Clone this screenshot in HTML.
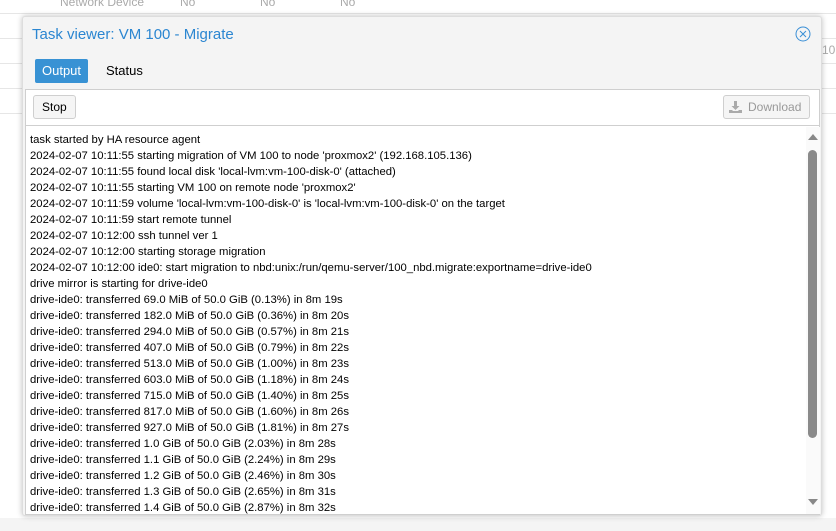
<!DOCTYPE html>
<html><head><style>
*{margin:0;padding:0;box-sizing:border-box}
body{width:836px;height:531px;background:#fff;font-family:"Liberation Sans",sans-serif;position:relative;overflow:hidden}
.bg{position:absolute;left:0;right:0;border-top:1px solid #e6e6e6}
.bgt{position:absolute;top:-5px;color:#aaa;font-size:12px}
.win{position:absolute;left:22px;top:16px;width:800px;height:500px;background:#f4f4f4;border:1px solid #ddd;border-radius:3px;box-shadow:0 0 6px rgba(0,0,0,.25)}
.title{position:absolute;left:9px;top:9px;font-size:15px;color:#2b86d1}
.close{position:absolute;left:772px;top:9px;width:16px;height:16px}
.tab{position:absolute;top:42px;height:24px;font-size:13px;line-height:24px;padding:0 7px}
.panel{position:absolute;left:2px;top:72px;width:795px;height:426px;background:#fff;border:1px solid #cfcfcf}
.tb{height:36px;border-bottom:1px solid #cfcfcf;position:relative}
.btn{position:absolute;top:5px;height:24px;border:1px solid #cfcfcf;border-radius:3px;background:#f5f5f5;font-size:12px;line-height:22px;padding:0 8px}
.log{position:absolute;left:4px;top:42px;font-size:11.3px;line-height:16px;color:#000;white-space:pre}
.sb{position:absolute;left:780px;top:37px;width:14px;height:387px;background:#fafafa}
</style></head><body>
<div class="bgt" style="left:60px">Network Device</div><div class="bgt" style="left:180px">No</div><div class="bgt" style="left:260px">No</div><div class="bgt" style="left:340px">No</div>
<div class="bg" style="top:13px"></div><div class="bg" style="top:38px"></div><div class="bg" style="top:63px"></div><div class="bg" style="top:88px"></div><div class="bg" style="top:113px"></div>
<div style="position:absolute;left:822px;top:43px;font-size:12px;color:#aaa">10</div>
<div style="position:absolute;left:0;right:0;top:518px;bottom:0;background:#f4f4f4"></div>
<div class="win">
<div class="title">Task viewer: VM 100 - Migrate</div>
<svg class="close" viewBox="0 0 16 16"><circle cx="8" cy="8" r="7" fill="none" stroke="#3a8fd6" stroke-width="1"/><path d="M5 5L11 11M11 5L5 11" stroke="#3a8fd6" stroke-width="1"/></svg>
<div class="tab" style="left:12px;background:#3892d4;color:#fff;border-radius:2px">Output</div>
<div class="tab" style="left:76px;color:#000">Status</div>
<div class="panel">
<div class="tb">
<div class="btn" style="left:7px">Stop</div>
<div class="btn" style="left:697px;color:#999;width:87px;padding-left:24px"><svg style="position:absolute;left:5px;top:5px" width="13" height="12" viewBox="0 0 13 12"><path d="M5 0h3v5h2.5L6.5 9 2.5 5H5z" fill="#aaa"/><path d="M0 9h3l1 1h5l1-1h3v3H0z" fill="#aaa"/></svg>Download</div>
</div>
<div class="log">task started by HA resource agent
2024-02-07 10:11:55 starting migration of VM 100 to node 'proxmox2' (192.168.105.136)
2024-02-07 10:11:55 found local disk 'local-lvm:vm-100-disk-0' (attached)
2024-02-07 10:11:55 starting VM 100 on remote node 'proxmox2'
2024-02-07 10:11:59 volume 'local-lvm:vm-100-disk-0' is 'local-lvm:vm-100-disk-0' on the target
2024-02-07 10:11:59 start remote tunnel
2024-02-07 10:12:00 ssh tunnel ver 1
2024-02-07 10:12:00 starting storage migration
2024-02-07 10:12:00 ide0: start migration to nbd:unix:/run/qemu-server/100_nbd.migrate:exportname=drive-ide0
drive mirror is starting for drive-ide0
drive-ide0: transferred 69.0 MiB of 50.0 GiB (0.13%) in 8m 19s
drive-ide0: transferred 182.0 MiB of 50.0 GiB (0.36%) in 8m 20s
drive-ide0: transferred 294.0 MiB of 50.0 GiB (0.57%) in 8m 21s
drive-ide0: transferred 407.0 MiB of 50.0 GiB (0.79%) in 8m 22s
drive-ide0: transferred 513.0 MiB of 50.0 GiB (1.00%) in 8m 23s
drive-ide0: transferred 603.0 MiB of 50.0 GiB (1.18%) in 8m 24s
drive-ide0: transferred 715.0 MiB of 50.0 GiB (1.40%) in 8m 25s
drive-ide0: transferred 817.0 MiB of 50.0 GiB (1.60%) in 8m 26s
drive-ide0: transferred 927.0 MiB of 50.0 GiB (1.81%) in 8m 27s
drive-ide0: transferred 1.0 GiB of 50.0 GiB (2.03%) in 8m 28s
drive-ide0: transferred 1.1 GiB of 50.0 GiB (2.24%) in 8m 29s
drive-ide0: transferred 1.2 GiB of 50.0 GiB (2.46%) in 8m 30s
drive-ide0: transferred 1.3 GiB of 50.0 GiB (2.65%) in 8m 31s
drive-ide0: transferred 1.4 GiB of 50.0 GiB (2.87%) in 8m 32s</div>
<div class="sb">
<svg style="position:absolute;left:2px;top:7px" width="10" height="6"><path d="M5 0L10 6H0z" fill="#888"/></svg>
<div style="position:absolute;left:2px;top:23px;width:9px;height:288px;background:#8a8a8a;border-radius:5px"></div>
<svg style="position:absolute;left:2px;top:372px" width="10" height="6"><path d="M0 0H10L5 6z" fill="#888"/></svg>
</div>
</div>
</div>
</body></html>
